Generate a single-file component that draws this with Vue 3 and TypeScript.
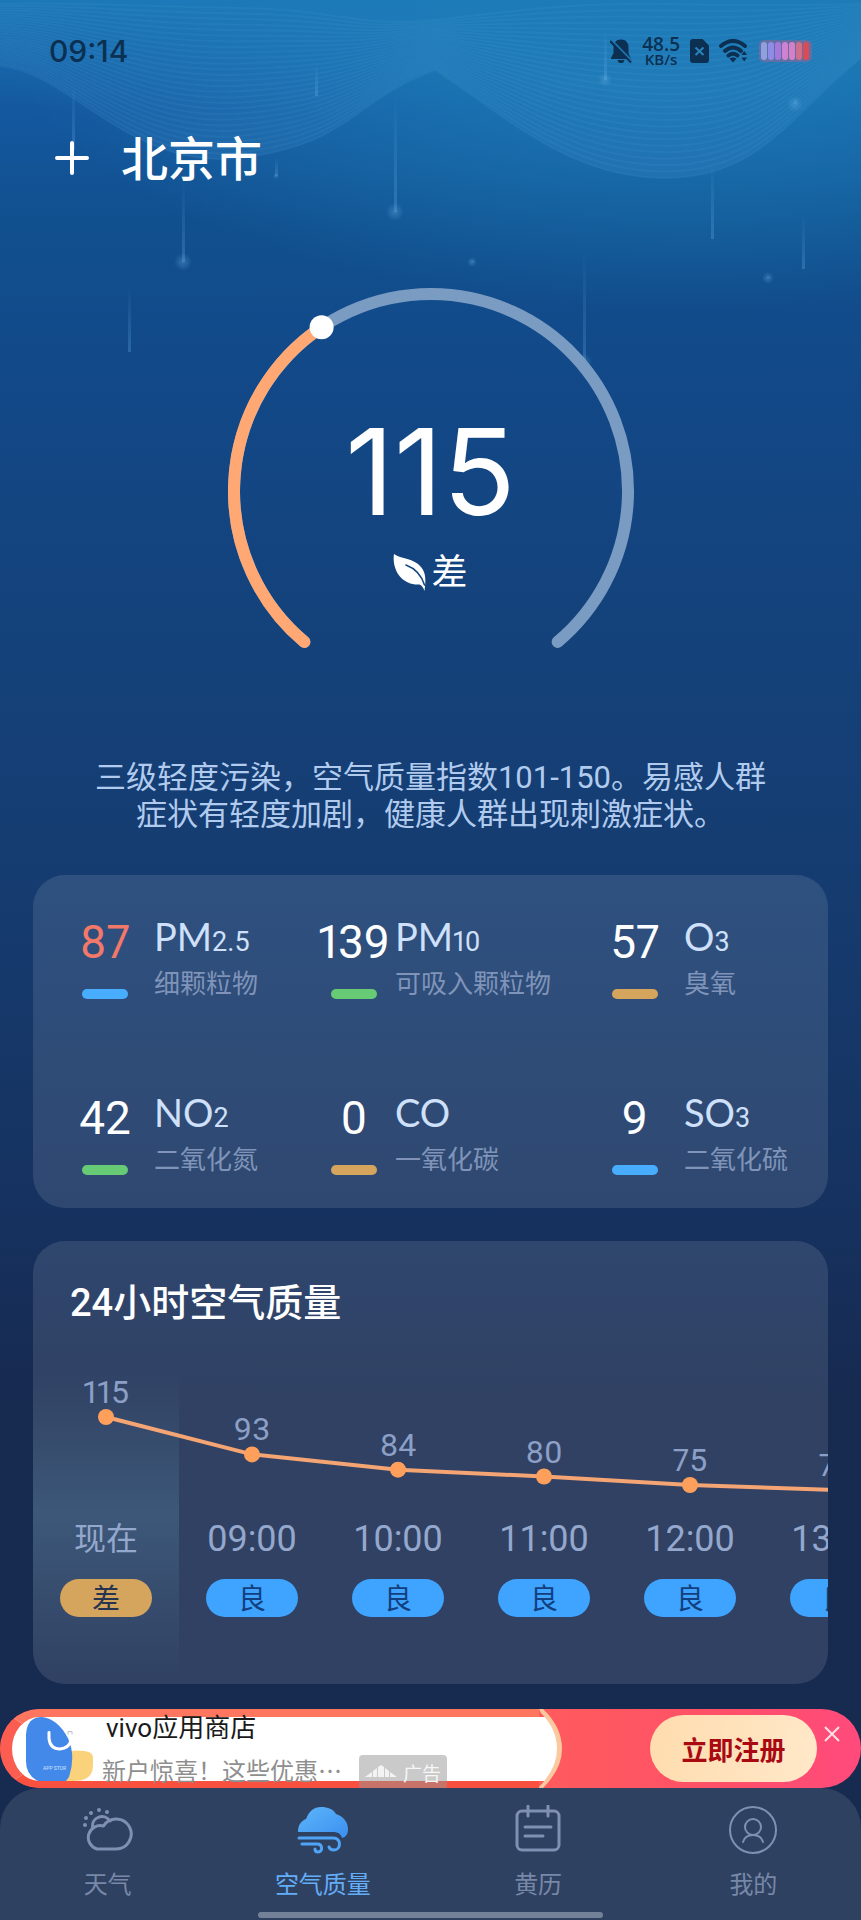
<script setup lang="ts">
interface Pollutant {
  value: number
  name: string
  sub: string
  label: string
  tone: 'blue' | 'green' | 'amber'
  high?: boolean
}

interface Hour {
  time: string
  aqi: number
  level: string
  poor?: boolean
}

const aqi = 115
const aqiMax = 303

const pollutants: Pollutant[] = [
  { value: 87, name: 'PM', sub: '2.5', label: '细颗粒物', tone: 'blue', high: true },
  { value: 139, name: 'PM', sub: '10', label: '可吸入颗粒物', tone: 'green' },
  { value: 57, name: 'O', sub: '3', label: '臭氧', tone: 'amber' },
  { value: 42, name: 'NO', sub: '2', label: '二氧化氮', tone: 'green' },
  { value: 0, name: 'CO', sub: '', label: '一氧化碳', tone: 'amber' },
  { value: 9, name: 'SO', sub: '3', label: '二氧化硫', tone: 'blue' },
]

const hours: Hour[] = [
  { time: '现在', aqi: 115, level: '差', poor: true },
  { time: '09:00', aqi: 93, level: '良' },
  { time: '10:00', aqi: 84, level: '良' },
  { time: '11:00', aqi: 80, level: '良' },
  { time: '12:00', aqi: 75, level: '良' },
  { time: '13:00', aqi: 72, level: '良' },
]

const batteryCells = ['#8f9fe0', '#8f8ce8', '#a678dc', '#cf82d2', '#d67fc4', '#cf6f8c', '#dc4a56']

// Gauge: 280 degree sweep starting at the lower left
const radius = 197
const cx = 210
const cy = 211
function onArc(ratio: number) {
  const angle = ((130 + 280 * ratio) * Math.PI) / 180
  return { x: cx + radius * Math.cos(angle), y: cy + radius * Math.sin(angle) }
}
function arc(from: number, to: number) {
  const a = onArc(from)
  const b = onArc(to)
  const large = (to - from) * 280 > 180 ? 1 : 0
  return `M${a.x} ${a.y} A${radius} ${radius} 0 ${large} 1 ${b.x} ${b.y}`
}
const knob = onArc(aqi / aqiMax)
const trackPath = arc(0, 1)
const valuePath = arc(0, aqi / aqiMax)

// Hourly line
const step = 146
const points = hours.map((h, i) => ({ x: step / 2 + i * step, y: 47 + (115 - h.aqi) * 1.7, aqi: h.aqi }))
const line = points.map((p) => `${p.x},${p.y}`).join(' ')

// Backdrop waves
const waves = Array.from({ length: 28 }, (_, i) => {
  const t = i / 27
  return (
    `M0 ${4 + 62 * t} C70 ${2 + 70 * t} 130 ${6 + 165 * t} 240 ${8 + 150 * t} ` +
    `S350 ${28 + 74 * t} 435 ${20 + 50 * t} C510 ${12 + 107 * t} 570 ${2 + 176 * t} 665 ${4 + 174 * t} ` +
    `S790 ${5 + 110 * t} 861 ${4 + 54 * t}`
  )
})

const streaks = [
  { x: 73, y1: 82, y2: 150, dot: 0 },
  { x: 183, y1: 180, y2: 262, dot: 9 },
  { x: 129, y1: 285, y2: 352, dot: 0 },
  { x: 316, y1: 64, y2: 96, dot: 0 },
  { x: 276, y1: 158, y2: 176, dot: 3 },
  { x: 395, y1: 92, y2: 212, dot: 9 },
  { x: 605, y1: 30, y2: 80, dot: 7 },
  { x: 584, y1: 250, y2: 362, dot: 8 },
  { x: 712, y1: 160, y2: 239, dot: 0 },
  { x: 803, y1: 215, y2: 269, dot: 0 },
  { x: 795, y1: 98, y2: 104, dot: 8 },
  { x: 768, y1: 276, y2: 278, dot: 6 },
  { x: 472, y1: 260, y2: 262, dot: 5 },
]
</script>

<template>
  <div class="page">
    <svg class="backdrop" viewBox="0 0 861 400" preserveAspectRatio="none" aria-hidden="true">
      <defs>
        <linearGradient id="streak" x1="0" y1="0" x2="0" y2="1">
          <stop offset="0" stop-color="#6db4ea" stop-opacity="0" />
          <stop offset="1" stop-color="#6db4ea" stop-opacity="0.28" />
        </linearGradient>
        <radialGradient id="drop">
          <stop offset="0" stop-color="#6db4ea" stop-opacity="0.35" />
          <stop offset="1" stop-color="#6db4ea" stop-opacity="0" />
        </radialGradient>
        <linearGradient id="veil" x1="0" y1="0" x2="0" y2="1">
          <stop offset="0" stop-color="#3f9bd6" stop-opacity="0.04" />
          <stop offset="1" stop-color="#3f8fd0" stop-opacity="0.22" />
        </linearGradient>
      </defs>
      <path d="M0 0 V66 C70 72 130 171 240 158 S350 102 435 70 C510 119 570 178 665 178 S790 115 861 58 V0 Z" fill="url(#veil)" />
      <path v-for="(d, i) in waves" :key="i" :d="d" class="wave" />
      <g v-for="s in streaks" :key="s.x">
        <rect :x="s.x - 1" :y="s.y1" width="3" :height="s.y2 - s.y1" fill="url(#streak)" />
        <circle v-if="s.dot" :cx="s.x" :cy="s.y2" :r="s.dot" fill="url(#drop)" />
      </g>
    </svg>

    <div class="status">
      <span class="clock">09:14</span>
      <div class="status-icons">
        <svg width="22" height="26" viewBox="0 0 22 26" class="ink">
          <path d="M11 1.5 C6 1.5 3.5 5 3.5 9.500 V15 L1 20 V21 H21 L18.500 15 V9.500 C18.500 5 16 1.500 11 1.500 Z M7.500 22 H14.500 C14 24.500 12.800 25 11 25 S8 24.500 7.500 22 Z" />
          <path d="M1 1.500 L22 23" class="slash" />
          <path d="M0 3 L21 24.500" stroke-width="2" class="ink-line" />
        </svg>
        <div class="speed"><span class="rate">48.5</span><span class="unit">KB/s</span></div>
        <svg width="19" height="24" viewBox="0 0 19 24" class="ink">
          <path d="M3 0 H12.500 L19 6.500 V21 Q19 24 16 24 H3 Q0 24 0 21 V3 Q0 0 3 0 Z" />
          <path d="M5.500 8.500 L13.500 16 M13.500 8.500 L5.500 16" class="cross" />
        </svg>
        <svg width="28" height="24" viewBox="0 0 28 24" class="wifi">
          <path d="M2 7 Q14 -3 26 7" />
          <path d="M6 12 Q14 5 22 12" />
          <path d="M9.500 16.500 Q14 13 18.500 16.500" />
          <path d="M10.500 19.500 Q14 17.500 17.500 19.500 L14 23.500 Z" class="solid" />
          <path d="M22.500 16 L25.200 12 L28 16 Z M22.500 18.500 L25.200 22.500 L28 18.500 Z" class="solid" />
        </svg>
        <svg width="53" height="22" viewBox="0 0 53 22" class="battery">
          <rect x="0" y="0" width="53" height="22" rx="5" fill="#d85a7a" opacity="0.35" />
          <rect v-for="(c, i) in batteryCells" :key="c" :x="2 + i * 7" y="2" width="6" height="18" rx="3" :fill="c" />
        </svg>
      </div>
    </div>

    <header class="head">
      <button class="add" type="button" aria-label="添加城市">
        <svg width="34" height="34" viewBox="0 0 34 34"><path d="M17 2 V32 M2 17 H32" /></svg>
      </button>
      <h1 class="city">北京市</h1>
    </header>

    <section class="gauge">
      <svg class="dial" width="420" height="370" viewBox="0 0 420 370" aria-hidden="true">
        <path :d="trackPath" class="dial-track" />
        <path :d="valuePath" class="dial-value" />
        <circle :cx="knob.x" :cy="knob.y" r="12" fill="#fff" />
      </svg>
      <div class="reading">
        <span class="aqi">{{ aqi }}</span>
        <span class="grade">
          <svg width="34" height="40" viewBox="0 0 34 40">
            <path d="M1 1 C8 6 21 5 28 14 C33 20 33 27 31.500 38 C30 34 28.500 32 26.500 31.500 C19 32 10 29 5 21 C1 14 0 7 1 1 Z" fill="#fff" />
            <path d="M13 12 C21 15 28 21 31.500 32" fill="none" stroke="#14457f" stroke-width="1.500" stroke-linecap="round" />
          </svg>
          <span>差</span>
        </span>
      </div>
    </section>

    <p class="advice">三级轻度污染，空气质量指数101-150。易感人群症状有轻度加剧，健康人群出现刺激症状。</p>

    <section class="card pollutants">
      <div v-for="p in pollutants" :key="p.name + p.sub" class="item">
        <div class="measure">
          <span class="value" :class="{ high: p.high }">{{ p.value }}</span>
          <span class="bar" :class="p.tone"></span>
        </div>
        <div class="about">
          <span class="name">{{ p.name }}<small v-if="p.sub">{{ p.sub }}</small></span>
          <span class="label">{{ p.label }}</span>
        </div>
      </div>
    </section>

    <section class="card hourly">
      <h2>24小时空气质量</h2>
      <div class="scroller">
        <div class="track">
          <div class="now"></div>
          <svg class="line" width="876" height="149" viewBox="0 0 876 149">
            <polyline :points="line" />
            <g v-for="p in points" :key="p.x">
              <circle :cx="p.x" :cy="p.y" r="8" />
              <text :x="p.x" :y="p.y - 14" text-anchor="middle">{{ p.aqi }}</text>
            </g>
          </svg>
          <div v-for="h in hours" :key="h.time" class="slot">
            <span class="time">{{ h.time }}</span>
            <span class="pill" :class="{ poor: h.poor }">{{ h.level }}</span>
          </div>
        </div>
      </div>
    </section>

    <footer class="bottom">
      <aside class="ad">
        <div class="ad-sheet">
          <svg class="store" width="68" height="64" viewBox="0 0 68 66" preserveAspectRatio="none" aria-hidden="true">
            <path d="M44 35 Q67 33 67 42 V50 Q67 66 48 66 H30 Z" fill="#fbd27c" />
            <path d="M0 18 Q1 0 16 0 Q32 2 42 22 Q50 40 43 62 L40 66 H12 Q0 60 0 46 Z" fill="#4389ea" />
            <path d="M23 16 V22 Q24 33 34 33 Q43 32 45 24" fill="none" stroke="#fff" stroke-width="3" stroke-linecap="round" />
            <path d="M42 18 V15 H46 V18" fill="none" stroke="#b9bcc4" stroke-width="1" />
            <text x="17" y="55">APP STOR</text>
          </svg>
          <div class="ad-text">
            <span class="ad-title">vivo应用商店</span>
            <span class="ad-note">新户惊喜！这些优惠…</span>
          </div>
          <span class="ad-tag">
            <svg width="32" height="14" viewBox="0 0 32 14" aria-hidden="true">
              <path d="M0 12 L7 7 V12 Z M8 12 V6 L12 3 V12 Z M13 12 V2 L16 0 L19 2 V12 Z M20 12 V3 L24 6 V12 Z M25 12 V7 L32 12 Z" fill="#f3f3f3" />
            </svg>
            广告
          </span>
        </div>
        <svg class="ad-edge" width="28" height="79" viewBox="0 0 28 79" aria-hidden="true">
          <path d="M0 8 H7 Q20 24 20 40 Q20 56 7 72 H0 Z" fill="#fff" />
          <path d="M0 0 H4 Q23 18 23 40 Q23 60 4 79 H0 L-1 79 Q18 60 18 40 Q18 20 2 4 Z" fill="#fbc9a0" />
        </svg>
        <button class="ad-go" type="button">立即注册</button>
        <button class="ad-close" type="button" aria-label="关闭">
          <svg width="16" height="16" viewBox="0 0 16 16"><path d="M1 1 L15 15 M15 1 L1 15" /></svg>
        </button>
      </aside>

      <nav class="tabs">
        <a href="#weather" class="tab">
          <svg width="52" height="52" viewBox="0 0 52 52">
            <path d="M10.500 22 A9.500 9.500 0 0 1 28 16" />
            <path d="M15 44 H34 A15 15 0 1 0 21.500 21 A11.500 11.500 0 1 0 15 44 Z" />
            <g class="dots">
              <circle cx="17" cy="5" r="2" /><circle cx="9" cy="8" r="2" /><circle cx="25" cy="7" r="2" />
              <circle cx="4" cy="13" r="2" /><circle cx="3" cy="20" r="2" />
            </g>
          </svg>
          <span>天气</span>
        </a>
        <a href="#air" class="tab active">
          <svg width="52" height="52" viewBox="0 0 52 52">
            <defs>
              <linearGradient id="cloud" x1="0" y1="0" x2="1" y2="1">
                <stop offset="0" stop-color="#5db6fa" />
                <stop offset="1" stop-color="#3b8ff0" />
              </linearGradient>
            </defs>
            <path d="M1 27 C1 20 4 16 9 14 C12 6 17 2 24 2 C31 2 36 4 39 9 C46 11 51 17 51 24 C51 29 49 32 45 33 C44 29 41 27 36 27 Z" fill="url(#cloud)" stroke="none" />
            <path d="M2 33 H36 C45 33 44 45 37 45 Q33 45 32 42" />
            <path d="M5 39 H20 C26 39 26 47 21 47 Q18 47 18 44" />
          </svg>
          <span>空气质量</span>
        </a>
        <a href="#almanac" class="tab">
          <svg width="52" height="52" viewBox="0 0 52 52">
            <rect x="5" y="6" width="42" height="39" rx="5" />
            <path d="M16 1 V11 M36 1 V11 M13 22 H39 M13 31 H31" />
          </svg>
          <span>黄历</span>
        </a>
        <a href="#mine" class="tab">
          <svg width="52" height="52" viewBox="0 0 52 52" class="fine">
            <circle cx="26" cy="25" r="23" />
            <circle cx="26" cy="22" r="8" />
            <path d="M16 37 Q18 30 26 30 Q34 30 36 37" />
          </svg>
          <span>我的</span>
        </a>
        <div class="home-bar"></div>
      </nav>
    </footer>
  </div>
</template>

<style>
body {
  background: #172a50;
}
</style>

<style scoped>
.page {
  position: relative;
  display: flex;
  flex-direction: column;
  min-height: 100vh;
  overflow: hidden;
  color: #fff;
  font-family: Roboto, "Noto Sans CJK SC", sans-serif;
  background:
    radial-gradient(ellipse 700px 310px at 80% 0, rgba(28, 122, 182, 0.9) 30%, rgba(28, 122, 182, 0) 100%),
    linear-gradient(#1b76b8 0, #14589f 110px, #11508f 220px, #124989 360px, #14427b 620px, #153d72 840px, #16315e 1230px, #172a50 1400px, #172a50 100%);
}

h1,
h2,
p {
  margin: 0;
  font-weight: 500;
}

button {
  padding: 0;
  border: 0;
  background: none;
  font-family: inherit;
  cursor: pointer;
}

.backdrop {
  position: absolute;
  top: 0;
  left: 0;
  width: 100%;
  height: 400px;
}

.wave {
  fill: none;
  stroke: #7fc0ee;
  stroke-opacity: 0.07;
  stroke-width: 2;
}

.status,
.head,
.gauge,
.advice {
  position: relative;
}

.status {
  display: flex;
  align-items: center;
  justify-content: space-between;
  height: 102px;
  padding: 0 49px;
  color: #0b3052;
}

.clock {
  font-family: Inter, sans-serif;
  font-size: 30px;
  font-weight: 500;
}

.status-icons {
  display: flex;
  align-items: center;
  gap: 10px;
}

.ink {
  fill: #0b3052;
}

.ink .slash {
  stroke: #1f75b4;
  stroke-width: 2;
}

.ink-line {
  stroke: #0b3052;
}

.cross {
  stroke: #2a83bd;
  stroke-width: 2;
}

.wifi {
  fill: none;
  stroke: #0b3052;
  stroke-width: 4;
  stroke-linecap: round;
}

.wifi .solid {
  fill: #0b3052;
  stroke: none;
}

.battery {
  margin-left: 2px;
}

.speed {
  display: flex;
  flex-direction: column;
  align-items: center;
  font-family: "Open Sans", sans-serif;
  font-weight: 600;
}

.rate {
  font-size: 19px;
  line-height: 16px;
}

.unit {
  font-size: 15px;
  line-height: 15px;
}

.head {
  display: flex;
  align-items: center;
  gap: 32px;
  height: 112px;
  padding: 0 55px;
}

.add {
  display: flex;
}

.add svg {
  fill: none;
  stroke: #fff;
  stroke-width: 4;
  stroke-linecap: round;
}

.city {
  padding-top: 4px;
  font-size: 47px;
  line-height: 56px;
}

.gauge {
  display: grid;
  justify-content: center;
  margin-top: 66px;
}

.dial,
.reading {
  grid-area: 1 / 1;
}

.dial path {
  fill: none;
  stroke-width: 12;
  stroke-linecap: round;
}

.dial .dial-track {
  stroke: #7b9cc2;
}

.dial .dial-value {
  stroke: #ffa873;
}

.reading {
  display: flex;
  flex-direction: column;
  align-items: center;
  padding-top: 142px;
  gap: 31px;
}

.aqi {
  font-family: Inter, sans-serif;
  font-size: 120px;
  line-height: 100px;
}

.grade {
  display: flex;
  align-items: center;
  gap: 4px;
  font-size: 36px;
  line-height: 40px;
}

.advice {
  margin-top: 109px;
  padding: 0 88px;
  color: #b1cbee;
  font-size: 31px;
  font-weight: 400;
  line-height: 37px;
  text-align: center;
}

.card {
  margin: 0 33px;
  border-radius: 32px;
  background: rgba(255, 255, 255, 0.11);
}

.pollutants {
  display: grid;
  grid-template-columns: 249fr 281fr 234fr;
  row-gap: 93px;
  margin-top: 42px;
  padding: 41px 0 33px 31px;
}

.item {
  display: flex;
  gap: 8px;
}

.item:nth-child(3n + 2) {
  gap: 0;
}

.measure {
  display: flex;
  flex-direction: column;
  align-items: center;
  width: 82px;
}

.value {
  font-size: 46px;
  font-variant-numeric: proportional-nums;
  line-height: 52px;
}

.value.high {
  color: #f2786a;
}

.bar {
  width: 46px;
  height: 10px;
  margin-top: 21px;
  border-radius: 5px;
}

.blue {
  background: #48adff;
}

.green {
  background: #67ca74;
}

.amber {
  background: #d5a45d;
}

.about {
  display: flex;
  flex-direction: column;
}

.name {
  height: 40px;
  color: #cfe0fa;
  font-family: Lato, sans-serif;
  font-size: 38px;
  line-height: 40px;
}

.name small {
  font-family: Roboto, sans-serif;
  font-size: 27px;
  font-variant-numeric: proportional-nums;
  line-height: 0;
}

.label {
  margin-top: 13px;
  color: #7f94b8;
  font-size: 26px;
  line-height: 30px;
}

.hourly {
  margin-top: 33px;
  overflow: hidden;
}

.hourly h2 {
  padding: 38px 37px 0;
  font-size: 38px;
  line-height: 48px;
}

.scroller {
  margin-top: 43px;
  overflow-x: auto;
  scrollbar-width: none;
}

.track {
  display: grid;
  grid-template-columns: repeat(6, 146px);
  width: max-content;
}

.now {
  grid-area: 1 / 1 / 3 / 2;
  background: linear-gradient(rgba(90, 140, 170, 0), rgba(90, 140, 170, 0.3) 46%, rgba(90, 140, 170, 0));
}

.line {
  grid-area: 1 / 1 / 2 / -1;
}

.line polyline {
  fill: none;
  stroke: #f5a473;
  stroke-width: 4;
}

.line circle {
  fill: #ff9f5c;
}

.line text {
  fill: #8c9fc6;
  font-size: 32px;
  font-variant-numeric: proportional-nums;
}

.slot {
  display: flex;
  flex-direction: column;
  align-items: center;
  grid-row: 2;
  padding-bottom: 67px;
}

.slot:nth-of-type(2) {
  grid-column: 1;
}

.time {
  color: #94a7cc;
  font-size: 36px;
  line-height: 40px;
}

.slot:nth-of-type(2) .time {
  font-size: 32px;
}

.pill {
  box-sizing: border-box;
  width: 92px;
  height: 38px;
  margin-top: 20px;
  padding-top: 2px;
  border-radius: 19px;
  background: #3fa4ff;
  color: #123f80;
  font-size: 28px;
  line-height: 38px;
  text-align: center;
}

.pill.poor {
  background: #d5a45d;
  color: #26344f;
}

.bottom {
  margin-top: auto;
  padding-top: 25px;
}

.ad {
  display: flex;
  align-items: center;
  height: 79px;
  overflow: hidden;
  border-radius: 40px;
  background: linear-gradient(90deg, #ff5d5c 60%, #ff5068 84%, #ff4a7c);
}

.ad-sheet {
  display: flex;
  flex: 1;
  align-items: flex-start;
  box-sizing: border-box;
  height: 79px;
  border: solid;
  border-width: 8px 0 7px 12px;
  border-color: #ff765f transparent #f9503f #fb5e50;
  border-radius: 40px 0 0 40px;
  background: #fff;
  padding-left: 14px;
}

.store {
  flex: none;
}

.store text {
  fill: #cfe2ff;
  font-size: 5px;
}

.ad-text {
  display: flex;
  flex: 1;
  flex-direction: column;
  padding-left: 8px;
  white-space: nowrap;
}

.ad-title {
  padding-left: 4px;
  color: #1a1a1a;
  font-size: 26px;
  line-height: 22px;
}

.ad-note {
  margin-top: 19px;
  color: #8f8f8f;
  font-family: "Noto Sans CJK SC", sans-serif;
  font-size: 24px;
  line-height: 24px;
}

.ad-tag {
  display: flex;
  align-items: center;
  gap: 6px;
  height: 34px;
  margin-top: 38px;
  margin-right: 92px;
  padding: 0 6px;
  border-radius: 4px;
  background: rgba(150, 150, 150, 0.5);
  color: #f6f6f6;
  font-size: 19px;
}

.ad-edge {
  flex: none;
  margin-right: 83px;
}

.ad-go {
  flex: none;
  width: 167px;
  height: 67px;
  border-radius: 34px;
  background: linear-gradient(100deg, #ffdcae, #ffe8c9);
  color: #a90a12;
  font-size: 26px;
  font-weight: 700;
}

.ad-close {
  display: flex;
  align-self: flex-start;
  margin: 17px 21px 0 7px;
}

.ad-close svg {
  fill: none;
  stroke: #ffdfe6;
  stroke-width: 2;
}

.tabs {
  display: grid;
  grid-template-columns: repeat(4, 1fr);
  padding-top: 17px;
  border-radius: 40px 40px 0 0;
  background: #2f4161;
}

.tab {
  display: flex;
  flex-direction: column;
  align-items: center;
  gap: 12px;
  color: #7788a9;
  font-size: 24px;
  line-height: 32px;
  text-decoration: none;
}

.tab svg {
  fill: none;
  stroke: #7f90b2;
  stroke-width: 3;
  stroke-linecap: round;
  stroke-linejoin: round;
}

.tab svg.fine {
  stroke-width: 2;
}

.tab .dots {
  fill: #7f90b2;
  stroke: none;
}

.tab.active {
  color: #63adf8;
}

.tab.active svg {
  stroke: #4fa4f7;
}

.home-bar {
  grid-column: 1 / -1;
  justify-self: center;
  width: 40%;
  height: 6px;
  margin: 11px 0 2px;
  border-radius: 3px;
  background: #738299;
}
</style>
